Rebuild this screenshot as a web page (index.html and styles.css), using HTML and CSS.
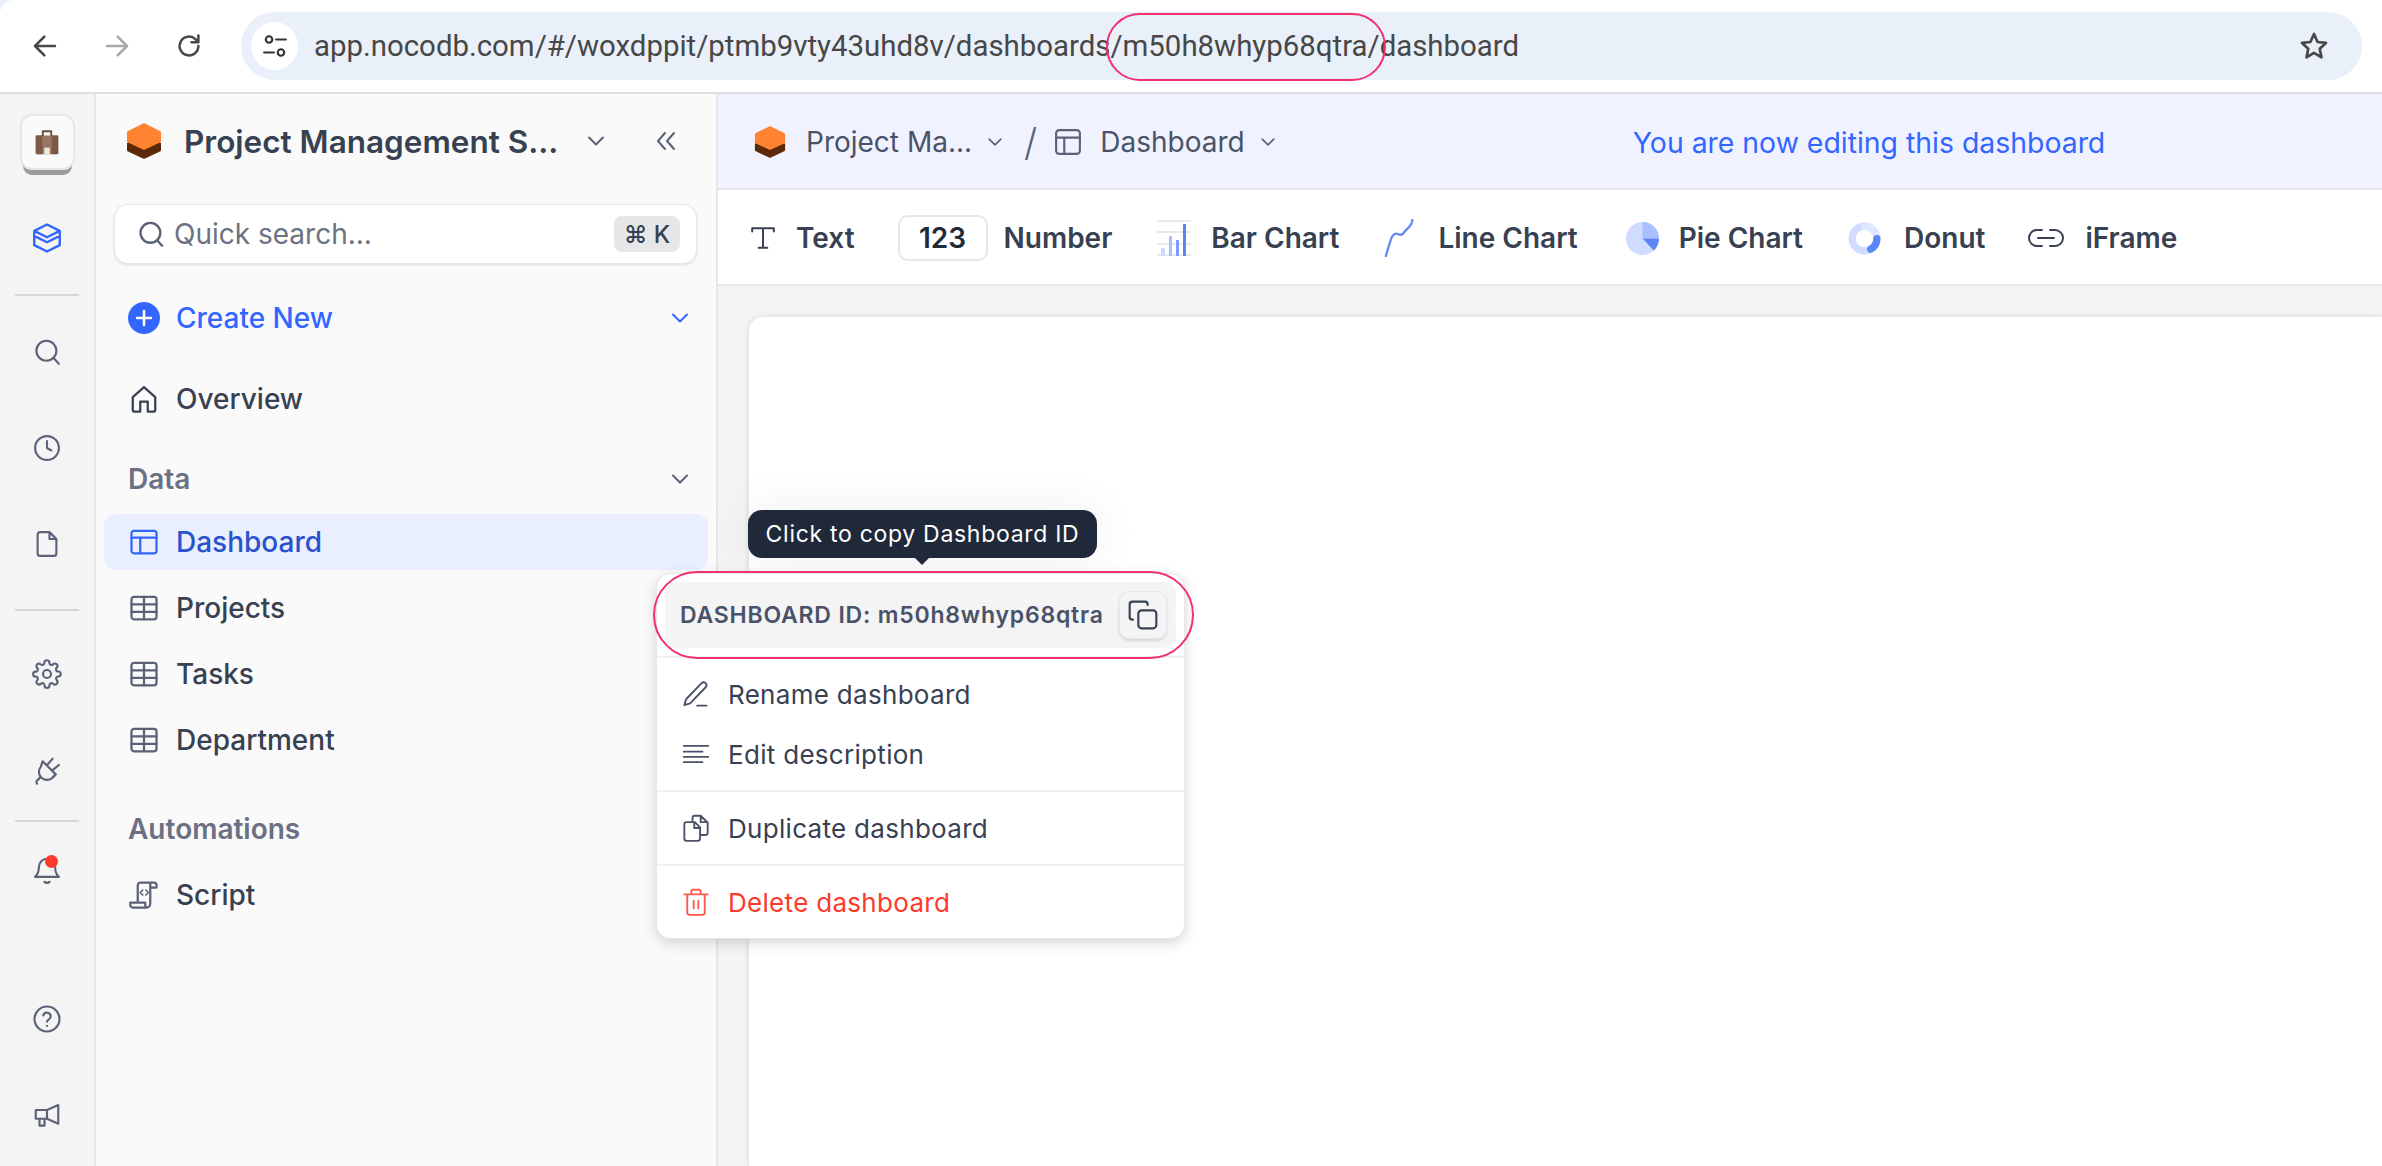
FILE: index.html
```html
<!DOCTYPE html>
<html lang="en">
<head>
  <meta charset="utf-8">
  <title>Dashboard - NocoDB</title>
  <link rel="stylesheet" href="styles.css">
</head>
<body>
<div class="page">

  <!-- browser bar -->
  <div class="browser-bar">
    <svg class="nav-icon" viewBox="0 0 24 24"><path d="M20 12H4.500M11.500 4.500 4 12l7.500 7.500"/></svg>
    <svg class="nav-icon nav-off" viewBox="0 0 24 24"><path d="M4 12h15.500M12.500 4.500 20 12l-7.500 7.500"/></svg>
    <svg class="nav-icon" viewBox="0 0 24 24"><path d="M19.500 12a7.500 7.500 0 1 1-2.400-5.500L19.500 9M19.500 3.500V9H14"/></svg>
    <div class="url-pill">
      <span class="url-tune">
        <svg viewBox="0 0 24 24"><circle cx="6.500" cy="6" r="3"/><path d="M13 6h9M2 18h9"/><circle cx="17.500" cy="18" r="3"/></svg>
      </span>
      <span class="url-text">app.nocodb.com/#/woxdppit/ptmb9vty43uhd8v/dashboards/m50h8whyp68qtra/dashboard</span>
      <svg class="url-star" viewBox="0 0 24 24"><path d="m12 3 2.700 6 6.300.7-4.700 4.300 1.300 6.500-5.600-3.300-5.600 3.300L7.700 14 3 9.700 9.300 9z"/></svg>
    </div>
  </div>

  <div class="app">

    <!-- icon rail -->
    <nav class="rail">
      <div class="rail-logo">
        <svg viewBox="0 0 32 32">
          <rect x="4" y="9" width="24" height="20" rx="2" fill="#9a7660"/>
          <rect x="4" y="9" width="7" height="20" fill="#7d5a46"/>
          <rect x="21" y="9" width="7" height="20" fill="#7d5a46"/>
          <path d="M11.500 9V4.500h9V9" fill="none" stroke="#6b4c3b" stroke-width="2"/>
          <rect x="13" y="22" width="6" height="7" fill="#ece8e0"/>
        </svg>
      </div>
      <div class="rail-cell rail-base">
        <svg class="icon-blue" viewBox="0 0 24 24"><path d="M12 2.500 21 7v3.500L12 15l-9-4.500V7zM3 7l9 4.500L21 7M3 10.500V17l9 4.500 9-4.500v-6.500"/></svg>
      </div>
      <div class="rail-line line-a"></div>
      <div class="rail-cell">
        <svg viewBox="0 0 24 24"><circle cx="11.500" cy="11" r="8"/><path d="m17.500 17 4 4.500"/></svg>
      </div>
      <div class="rail-cell">
        <svg viewBox="0 0 24 24"><circle cx="12" cy="12" r="9.500"/><path d="M12 6.500V12l3.500 2"/></svg>
      </div>
      <div class="rail-cell">
        <svg viewBox="0 0 24 24"><path d="M14 2.500H6.500a2 2 0 0 0-2 2v15a2 2 0 0 0 2 2h11a2 2 0 0 0 2-2V8zM14 2.500V8h5.500"/></svg>
      </div>
      <div class="rail-line line-b"></div>
      <div class="rail-cell">
        <svg viewBox="0 0 24 24"><circle cx="12" cy="12" r="3.200"/><path d="M19.400 15a1.700 1.700 0 0 0 .3 1.800l.1.100a2 2 0 1 1-2.900 2.900l-.1-.1a1.700 1.700 0 0 0-2.800 1.200v.2a2 2 0 1 1-4 0v-.1a1.700 1.700 0 0 0-2.900-1.200l-.1.100a2 2 0 1 1-2.800-2.900l.1-.1a1.700 1.700 0 0 0-1.200-2.800h-.2a2 2 0 1 1 0-4h.1a1.700 1.700 0 0 0 1.200-2.900l-.1-.1a2 2 0 1 1 2.900-2.800l.1.100a1.700 1.700 0 0 0 2.800-1.200v-.2a2 2 0 1 1 4 0v.1a1.700 1.700 0 0 0 2.900 1.200l.1-.1a2 2 0 1 1 2.800 2.900l-.1.100a1.700 1.700 0 0 0 1.200 2.800h.2a2 2 0 1 1 0 4h-.1a1.700 1.700 0 0 0-1.500 1z"/></svg>
      </div>
      <div class="rail-cell">
        <svg viewBox="0 0 24 24"><path d="M8.500 5l10.500 10.500-3 3a6.400 6.400 0 0 1-9-9zM12 8 16.500 3M16 12.500 21.500 8M7 17.500l-3 3c-.6.7-.6 1.500 0 2.500"/></svg>
      </div>
      <div class="rail-line line-c"></div>
      <div class="rail-cell rail-bell">
        <svg viewBox="0 0 24 24"><path d="M12 3a6.500 6.500 0 0 0-6.500 6.500c0 5-2 7-3 8h19c-1-1-3-3-3-8A6.500 6.500 0 0 0 12 3zM10 21.500c1 1 3 1 4 0"/></svg>
        <span class="bell-dot"></span>
      </div>
      <div class="rail-cell rail-push">
        <svg viewBox="0 0 24 24"><circle cx="12" cy="12" r="10"/><path d="M9 9.200a3 3 0 0 1 5.900 1c0 2-2.900 2.500-2.900 4M12 17.500h0"/></svg>
      </div>
      <div class="rail-cell">
        <svg viewBox="0 0 24 24"><path d="M21 4v15l-9-4H3V8h9zM12 8v7M6 15v5.500h4V15"/></svg>
      </div>
    </nav>

    <!-- sidebar -->
    <aside class="sidebar">
      <div class="base-row">
        <svg class="hex" viewBox="0 0 36 36">
          <path d="M18 10 35 20v7a2 2 0 0 1-1 1.500L19 35.500a2 2 0 0 1-2 0L2 28.500A2 2 0 0 1 1 27v-7z" fill="#5c2a0a"/>
          <path d="M17 .5a2 2 0 0 1 2 0L34 8a2 2 0 0 1 1 1.500V19L18 27 1 19V9.500A2 2 0 0 1 2 8z" fill="#ff8330"/>
        </svg>
        <span class="base-name">Project Management S...</span>
        <svg class="chev chev-base" viewBox="0 0 24 24"><path d="m5 8.500 7 7 7-7"/></svg>
        <svg class="chev chev-collapse" viewBox="0 0 24 24"><path d="M11 4 4 12l7 8M20 4l-7 8 7 8"/></svg>
      </div>

      <div class="quick-search">
        <svg viewBox="0 0 24 24"><circle cx="11.500" cy="11" r="8.500"/><path d="m17.500 17.500 4 4.500"/></svg>
        <span class="quick-label">Quick search...</span>
        <span class="kbd">⌘ K</span>
      </div>

      <div class="create-row">
        <span class="plus-dot"><svg viewBox="0 0 24 24"><path d="M12 5v14M5 12h14"/></svg></span>
        <span class="create-label">Create New</span>
        <svg class="chev chev-blue" viewBox="0 0 24 24"><path d="m5 8.500 7 7 7-7"/></svg>
      </div>

      <a class="side-item item-overview">
        <svg viewBox="0 0 24 24"><path d="M3 10.500 12 2.500l9 8V21a1 1 0 0 1-1 1h-5v-8H9v8H4a1 1 0 0 1-1-1z"/></svg>
        <span>Overview</span>
      </a>

      <div class="side-head head-data">
        <span>Data</span>
        <svg class="chev" viewBox="0 0 24 24"><path d="m5 8.500 7 7 7-7"/></svg>
      </div>

      <a class="side-item item-active">
        <svg viewBox="0 0 24 24"><rect x="2" y="3" width="20" height="18" rx="2"/><path d="M2 8.500h20M9 8.500V21"/></svg>
        <span>Dashboard</span>
      </a>
      <a class="side-item item-table">
        <svg viewBox="0 0 24 24"><rect x="2" y="3" width="20" height="18" rx="2"/><path d="M2 9h20M2 15h20M12 3v18"/></svg>
        <span>Projects</span>
      </a>
      <a class="side-item item-table">
        <svg viewBox="0 0 24 24"><rect x="2" y="3" width="20" height="18" rx="2"/><path d="M2 9h20M2 15h20M12 3v18"/></svg>
        <span>Tasks</span>
      </a>
      <a class="side-item item-table">
        <svg viewBox="0 0 24 24"><rect x="2" y="3" width="20" height="18" rx="2"/><path d="M2 9h20M2 15h20M12 3v18"/></svg>
        <span>Department</span>
      </a>

      <div class="side-head head-auto"><span>Automations</span></div>

      <a class="side-item item-script">
        <svg viewBox="0 0 24 24"><path d="M7 18V4a2 2 0 0 1 2-2h11a2 2 0 0 1 2 2v2h-4M18 2a1.500 1.500 0 0 0-1 1.500V19a3 3 0 0 1-3 3H3a2 2 0 0 1-2-2v-2h12v2a2 2 0 0 0 1 2"/><path d="m11 8-2 2 2 2M13.500 8l2 2-2 2" stroke-width="1.300"/></svg>
        <span>Script</span>
      </a>
    </aside>

    <!-- main area -->
    <main class="main">
      <div class="crumb-bar">
        <svg class="hex-small" viewBox="0 0 36 36">
          <path d="M18 10 35 20v7a2 2 0 0 1-1 1.500L19 35.500a2 2 0 0 1-2 0L2 28.500A2 2 0 0 1 1 27v-7z" fill="#5c2a0a"/>
          <path d="M17 .5a2 2 0 0 1 2 0L34 8a2 2 0 0 1 1 1.500V19L18 27 1 19V9.500A2 2 0 0 1 2 8z" fill="#ff8330"/>
        </svg>
        <span class="crumb-text crumb-base">Project Ma...</span>
        <svg class="chev chev-crumb" viewBox="0 0 24 24"><path d="m5 8.500 7 7 7-7"/></svg>
        <span class="crumb-slash">/</span>
        <svg class="crumb-icon" viewBox="0 0 24 24"><rect x="2.500" y="2.500" width="19" height="19" rx="2.500"/><path d="M2.500 8.500h19M9 8.500v13"/></svg>
        <span class="crumb-text">Dashboard</span>
        <svg class="chev chev-crumb" viewBox="0 0 24 24"><path d="m5 8.500 7 7 7-7"/></svg>
        <span class="edit-note">You are now editing this dashboard</span>
      </div>

      <div class="widget-bar">
        <div class="widget widget-text">
          <svg class="widget-t" viewBox="0 0 24 24"><path d="M2 6V3h20v3M12 3v18M8 21h8"/></svg>
          <span>Text</span>
        </div>
        <div class="widget widget-number">
          <span class="num-box">123</span>
          <span>Number</span>
        </div>
        <div class="widget">
          <svg class="widget-chart" viewBox="0 0 34 36">
            <path d="M0 1h34M0 12h34M0 24h34M0 35h34" stroke="#dfe2e8" stroke-width="1.500"/>
            <rect x="4" y="28" width="4" height="8" fill="#cfdaff"/>
            <rect x="12" y="16" width="3" height="20" fill="#a9bfff"/>
            <rect x="19" y="20" width="3" height="16" fill="#7a9cff"/>
            <rect x="26" y="4" width="3" height="32" fill="#5c85f5"/>
          </svg>
          <span>Bar Chart</span>
        </div>
        <div class="widget widget-line">
          <svg class="widget-chart" viewBox="0 0 34 40"><path d="M1 39C4 29 6 21 8 18s4-3 6-2 5 1 7-3l3-3c2-2 3-4 4-5l1-4" fill="none" stroke="#6388f5" stroke-width="2.400"/></svg>
          <span>Line Chart</span>
        </div>
        <div class="widget">
          <svg class="widget-round" viewBox="0 0 32 32">
            <circle cx="16" cy="16" r="16" fill="#cfdbff"/>
            <path d="M16 0a16 16 0 0 1 16 16H16z" fill="#a9bfff"/>
            <path d="M16 16h16a16 16 0 0 1-5 11.600z" fill="#5c85f5"/>
          </svg>
          <span>Pie Chart</span>
        </div>
        <div class="widget widget-donut">
          <svg class="widget-round" viewBox="0 0 32 32">
            <circle cx="16" cy="16" r="12" fill="none" stroke="#cfdbff" stroke-width="7"/>
            <path d="M16 4a12 12 0 0 1 12 12" fill="none" stroke="#dfe7ff" stroke-width="7"/>
            <path d="M28 16a12 12 0 0 1-6 10.400" fill="none" stroke="#5c85f5" stroke-width="7"/>
          </svg>
          <span>Donut</span>
        </div>
        <div class="widget">
          <svg class="widget-link" viewBox="0 0 38 24"><path d="M15 4H10a8 8 0 0 0 0 16h5M23 4h5a8 8 0 0 1 0 16h-5M11 12h16"/></svg>
          <span>iFrame</span>
        </div>
      </div>

      <div class="canvas-area">
        <div class="canvas"></div>
      </div>
    </main>
  </div>

  <!-- tooltip and dropdown float over the sidebar and canvas -->
  <div class="tooltip">Click to copy Dashboard ID</div>

  <div class="menu">
    <div class="menu-id-wrap">
      <div class="menu-id">
        <span>DASHBOARD ID: m50h8whyp68qtra</span>
        <span class="copy-btn">
          <svg viewBox="0 0 24 24"><rect x="8.500" y="8.500" width="13.500" height="13.500" rx="2.500"/><path d="M4.500 15.500H4a2 2 0 0 1-2-2V4a2 2 0 0 1 2-2h9.500a2 2 0 0 1 2 2v.5"/></svg>
        </span>
      </div>
    </div>
    <div class="menu-group">
      <div class="menu-item">
        <svg viewBox="0 0 24 24"><path d="M17 2.500a2.500 2.500 0 0 1 3.500 3.500L7 20l-5 1.500L3.500 16.500zM13 22h8"/></svg>
        <span>Rename dashboard</span>
      </div>
      <div class="menu-item">
        <svg viewBox="0 0 24 24"><path d="M1.500 5h21M1.500 10h16M1.500 14.500h21M1.500 19h16"/></svg>
        <span>Edit description</span>
      </div>
    </div>
    <div class="menu-group">
      <div class="menu-item">
        <svg viewBox="0 0 24 24"><path d="M9 6V3.500a2 2 0 0 1 2-2h5l6 6V16a2 2 0 0 1-2 2h-4M16 1.500V7h6"/><path d="M4 7h7l4.500 4.500V21a2 2 0 0 1-2 2H4a2 2 0 0 1-2-2V9a2 2 0 0 1 2-2zM10.500 7v5h5"/></svg>
        <span>Duplicate dashboard</span>
      </div>
    </div>
    <div class="menu-group">
      <div class="menu-item menu-danger">
        <svg viewBox="0 0 24 24"><path d="M2 5.500h20M8 5.500V3a1.500 1.500 0 0 1 1.500-1.500h5A1.500 1.500 0 0 1 16 3v2.500M4.500 5.500V21a2 2 0 0 0 2 2h11a2 2 0 0 0 2-2V5.500M10 11v6.500M14 11v6.500"/></svg>
        <span>Delete dashboard</span>
      </div>
    </div>
  </div>

  <!-- hand drawn highlights on top of the screenshot -->
  <div class="mark mark-url"></div>
  <div class="mark mark-id"></div>
</div>
</body>
</html>
```

FILE: styles.css
```css
* {
  box-sizing: border-box;
}

html, body {
  height: 100%;
}

body {
  margin: 0;
  background-color: #e9f0f9;
  font-family: "Inter", "Liberation Sans", sans-serif;
  color: #374151;
  overflow: hidden;
}

svg {
  flex: none;
  fill: none;
  stroke: currentColor;
  stroke-width: 2;
  stroke-linecap: round;
  stroke-linejoin: round;
}

.page {
  position: relative;
  width: 2382px;
  height: 1166px;
  display: flex;
  flex-direction: column;
}

/* browser bar */
.browser-bar {
  height: 94px;
  flex: none;
  display: flex;
  align-items: center;
  padding: 0 20px 0 30px;
  background-color: #fff;
  border-bottom: 2px solid #dedede;
  border-top-left-radius: 14px;
}

.nav-icon {
  width: 30px;
  height: 30px;
  margin-right: 42px;
  color: #474747;
  stroke-width: 2;
}

.nav-off {
  color: #a8a8a8;
}

.url-pill {
  flex: 1;
  height: 68px;
  margin-left: -5px;
  display: flex;
  align-items: center;
  padding: 0 32px 0 10px;
  background-color: #e9f0f9;
  border-radius: 34px;
}

.url-tune {
  width: 47px;
  height: 48px;
  display: flex;
  align-items: center;
  justify-content: center;
  background-color: #fff;
  border-radius: 50%;
}

.url-tune svg {
  width: 26px;
  height: 26px;
  color: #333;
}

.url-text {
  flex: 1;
  margin-left: 16px;
  font-family: "Roboto", "Liberation Sans", sans-serif;
  font-size: 29.400px;
  color: #474747;
}

.url-star {
  width: 32px;
  height: 32px;
  color: #474747;
}

/* app */
.app {
  flex: 1;
  min-height: 0;
  display: flex;
}

.rail {
  width: 96px;
  flex: none;
  display: flex;
  flex-direction: column;
  align-items: center;
  padding: 20px 0 3px;
  background-color: #f4f4f5;
  border-right: 2px solid #e7e7e9;
}

.rail-logo {
  width: 55px;
  height: 56px;
  flex: none;
  display: flex;
  align-items: center;
  justify-content: center;
  background-color: #fafafa;
  border: 2px solid #e7e7e9;
  border-radius: 12px;
  box-shadow: 0 8px 0 -3px #9c9c9c;
}

.rail-logo svg {
  width: 30px;
  height: 32px;
  stroke: none;
}

.rail-cell {
  position: relative;
  height: 96px;
  flex: none;
  display: flex;
  align-items: center;
  justify-content: center;
  color: #5b6278;
}

.rail-cell svg {
  width: 30px;
  height: 30px;
  stroke-width: 1.700;
}

.rail-base {
  margin-top: 20px;
}

.rail-cell .icon-blue {
  width: 34px;
  height: 36px;
  color: #3366ff;
}

.rail-line {
  width: 64px;
  height: 2px;
  flex: none;
  background-color: #d5d5db;
}

.line-a {
  margin: 8px 0 8px;
}

.line-b {
  margin: 17px 0 15px;
}

.line-c {
  margin: 2px 0 0;
}

.bell-dot {
  position: absolute;
  top: 33px;
  right: 4px;
  width: 13px;
  height: 13px;
  background-color: #fb3a2b;
  border-radius: 50%;
}

.rail-push {
  margin-top: auto;
}

/* sidebar */
.sidebar {
  width: 622px;
  flex: none;
  padding: 0 8px;
  background-color: #fafafa;
  border-right: 2px solid #e7e7e9;
}

.base-row {
  height: 94px;
  display: flex;
  align-items: center;
  padding: 0 0 0 22px;
  margin-bottom: 16px;
}

.hex {
  width: 36px;
  height: 36px;
  stroke: none;
}

.base-name {
  margin-left: 22px;
  font-size: 31.500px;
  font-weight: 600;
  color: #374151;
  white-space: nowrap;
}

.chev {
  width: 24px;
  height: 24px;
  color: #5b6278;
}

.chev-base {
  margin-left: 26px;
}

.chev-collapse {
  margin-left: 46px;
}

.quick-search {
  width: 583px;
  height: 60px;
  margin-left: 10px;
  display: flex;
  align-items: center;
  padding: 0 16px 0 22px;
  background-color: #fff;
  border: 1px solid #e7e7e9;
  border-radius: 14px;
  box-shadow: 0 1px 3px rgba(0, 0, 0, .12);
}

.quick-search svg {
  width: 28px;
  height: 28px;
  color: #5b6278;
}

.quick-label {
  flex: 1;
  margin-left: 9px;
  font-size: 28px;
  color: #6b7280;
}

.kbd {
  width: 66px;
  height: 36px;
  display: flex;
  align-items: center;
  justify-content: center;
  background-color: #e7e7e9;
  border-radius: 8px;
  font-size: 24px;
  font-weight: 500;
  color: #374151;
}

.create-row {
  height: 36px;
  display: flex;
  align-items: center;
  margin: 36px 0 0 24px;
  padding-right: 16px;
}

.plus-dot {
  width: 32px;
  height: 32px;
  display: flex;
  align-items: center;
  justify-content: center;
  background-color: #3366ff;
  border-radius: 50%;
  color: #fff;
}

.plus-dot svg {
  width: 24px;
  height: 24px;
  stroke-width: 2.500;
}

.create-label {
  flex: 1;
  margin-left: 16px;
  font-size: 28px;
  font-weight: 500;
  color: #3366ff;
}

.chev-blue {
  color: #3366ff;
}

.side-item {
  height: 56px;
  display: flex;
  align-items: center;
  padding-left: 25px;
  border-radius: 12px;
  font-size: 28px;
  font-weight: 500;
  color: #374151;
}

.side-item svg {
  width: 30px;
  height: 30px;
  color: #5b6278;
  stroke-width: 1.800;
  margin-right: 17px;
}

.item-overview {
  margin-top: 35px;
}

.item-overview svg {
  color: #374151;
}

.item-active {
  background-color: #e9effe;
  color: #2952cc;
}

.item-active svg {
  color: #3366ff;
}

.item-table {
  margin-top: 10px;
}

.item-script {
  margin-top: 20px;
}

.side-head {
  height: 36px;
  display: flex;
  align-items: center;
  justify-content: space-between;
  padding: 0 16px 0 24px;
  font-size: 28px;
  font-weight: 600;
  color: #6b7085;
}

.head-data {
  margin: 34px 0 17px;
}

.head-auto {
  margin: 43px 0 0;
}

/* main */
.main {
  flex: 1;
  min-width: 0;
  display: flex;
  flex-direction: column;
}

.crumb-bar {
  height: 96px;
  flex: none;
  display: flex;
  align-items: center;
  padding: 2px 0 0 36px;
  background-color: #f0f3ff;
  border-bottom: 2px solid #e7e7e9;
}

.hex-small {
  width: 32px;
  height: 32px;
  stroke: none;
}

.crumb-text {
  margin-left: 20px;
  font-size: 28px;
  color: #4a5268;
  white-space: nowrap;
}

.chev-crumb {
  width: 20px;
  height: 20px;
  margin-left: 13px;
  color: #5b6278;
}

.crumb-slash {
  margin-left: 19px;
  font-size: 38px;
  font-weight: 300;
  color: #5b6278;
}

.crumb-icon {
  width: 30px;
  height: 30px;
  margin-left: 16px;
  color: #5b6278;
  stroke-width: 1.700;
}

.crumb-icon + .crumb-text {
  margin-left: 17px;
}

.edit-note {
  margin-left: 355px;
  font-size: 28.400px;
  color: #3366ff;
  white-space: nowrap;
}

.widget-bar {
  height: 96px;
  flex: none;
  display: flex;
  align-items: center;
  gap: 45px;
  padding: 2px 0 0 32px;
  background-color: #fff;
  border-bottom: 2px solid #e7e7e9;
}

.widget {
  display: flex;
  align-items: center;
  gap: 20px;
  font-size: 28px;
  font-weight: 600;
  color: #374151;
}

.widget-text {
  margin-right: -2px;
}

.widget-number {
  gap: 16px;
}

.widget-line {
  margin-right: 3px;
}

.widget-donut {
  gap: 23px;
  margin-right: -3px;
}

.widget-t {
  width: 26px;
  height: 30px;
  color: #374151;
  stroke-width: 1.800;
}

.num-box {
  width: 90px;
  height: 46px;
  display: flex;
  align-items: center;
  justify-content: center;
  border: 2px solid #e7e7e9;
  border-radius: 10px;
  color: #1f293a;
}

.widget-chart {
  width: 34px;
  height: 38px;
}

.widget-chart rect {
  stroke: none;
}

.widget-round {
  width: 33px;
  height: 33px;
  stroke: none;
}

.widget-link {
  width: 38px;
  height: 26px;
  color: #374151;
}

.canvas-area {
  flex: 1;
  min-height: 0;
  display: flex;
  padding: 31px 0 0 31px;
  background-color: #f4f4f5;
}

.canvas {
  flex: 1;
  background-color: #fff;
  border-top-left-radius: 14px;
  box-shadow: 0 0 6px rgba(0, 0, 0, .12);
}

/* tooltip */
.tooltip {
  position: absolute;
  left: 748px;
  top: 510px;
  width: 349px;
  height: 48px;
  display: flex;
  align-items: center;
  justify-content: center;
  background-color: #1f293a;
  border-radius: 14px;
  font-size: 23px;
  letter-spacing: .7px;
  color: #fff;
  box-shadow: 0 0 50px rgba(0, 0, 0, .07);
}

.tooltip::after {
  content: "";
  position: absolute;
  left: 167px;
  bottom: -7px;
  border: 7px solid transparent;
  border-bottom-width: 0;
  border-top-color: #1f293a;
}

/* dropdown */
.menu {
  position: absolute;
  left: 656px;
  top: 573px;
  width: 529px;
  height: 366px;
  background-color: #fff;
  border: 1px solid #e7e7e9;
  border-radius: 14px;
  box-shadow: 0 4px 14px rgba(0, 0, 0, .16);
}

.menu-id-wrap {
  padding: 8px;
}

.menu-id {
  height: 66px;
  display: flex;
  align-items: center;
  justify-content: space-between;
  padding: 0 9px 0 15px;
  background-color: #f4f4f5;
  border-radius: 10px;
  font-size: 23px;
  font-weight: 600;
  letter-spacing: .8px;
  color: #4a5268;
}

.copy-btn {
  width: 48px;
  height: 48px;
  display: flex;
  align-items: center;
  justify-content: center;
  border: 1px solid #e7e7e9;
  border-radius: 10px;
  background-color: #f4f4f5;
  box-shadow: 0 2px 3px rgba(0, 0, 0, .12);
}

.copy-btn svg {
  width: 32px;
  height: 32px;
  color: #374151;
  stroke-width: 1.600;
}

.menu-group {
  padding: 6px 0;
  border-top: 2px solid #f0f0f2;
}

.menu-item {
  height: 60px;
  display: flex;
  align-items: center;
  padding-left: 25px;
  font-size: 26px;
  letter-spacing: .3px;
  color: #374151;
}

.menu-item svg {
  width: 28px;
  height: 28px;
  margin-right: 18px;
  color: #4a5268;
  stroke-width: 1.600;
}

.menu-danger {
  color: #fb3a2b;
}

.menu-danger svg {
  color: #fb5a4e;
}

/* pink hand drawn marks */
.mark {
  position: absolute;
  border: 2px solid #f0306f;
}

.mark-url {
  left: 1106px;
  top: 13px;
  width: 280px;
  height: 68px;
  border-radius: 34px;
}

.mark-id {
  left: 653px;
  top: 571px;
  width: 541px;
  height: 88px;
  border-radius: 44px;
}
```
